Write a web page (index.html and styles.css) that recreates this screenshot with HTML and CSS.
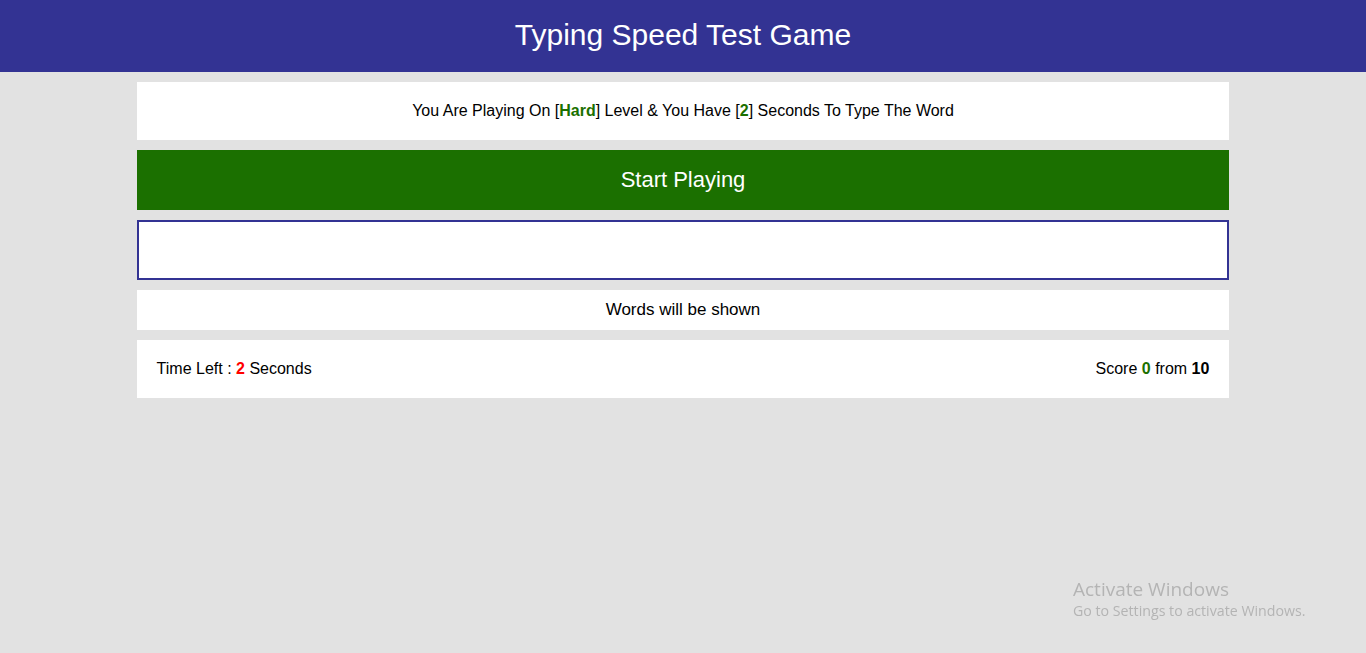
FILE: index.html
```html
<!DOCTYPE html>
<html lang="en">
<head>
<meta charset="utf-8">
<title>Typing Speed Test Game</title>
<link rel="stylesheet" href="styles.css">
</head>
<body>
  <header class="site-header">
    <h1 class="title">Typing Speed Test Game</h1>
  </header>
  <main class="game">
    <div class="message">You Are Playing On [<span class="lvl">Hard</span>] Level &amp; You Have [<span class="lvl">2</span>] Seconds To Type The Word</div>
    <div class="start">Start Playing</div>
    <input class="input" type="text" aria-label="Type the word">
    <div class="upcoming">Words will be shown</div>
    <div class="control">
      <div class="time">Time Left : <span class="secs">2</span> Seconds</div>
      <div class="score">Score <span class="got">0</span> from <span class="total">10</span></div>
    </div>
  </main>
  <div class="activate">
    <div class="activate-title">Activate Windows</div>
    <div class="activate-sub">Go to Settings to activate Windows.</div>
  </div>
</body>
</html>
```
FILE: styles.css
```css
* { box-sizing: border-box; }
html, body { margin: 0; padding: 0; }
body {
  background: #e2e2e2;
  font-family: "Liberation Sans", Arial, sans-serif;
  color: #000;
  font-size: 16px;
  height: 653px;
  overflow: hidden;
}
.site-header {
  background: #333393;
  height: 72px;
  display: flex;
  align-items: center;
  justify-content: center;
}
.title {
  margin: 0;
  color: #fff;
  font-weight: normal;
  font-size: 30px;
  line-height: 34px;
  padding-bottom: 3px;
}
.game {
  width: 80%;
  margin: 10px auto 0;
  display: flex;
  flex-direction: column;
  gap: 10px;
}
.message {
  background: #fff;
  height: 58px;
  display: flex;
  align-items: center;
  justify-content: center;
}
.lvl { color: #1b7000; font-weight: bold; }
.start {
  background: #1b7000;
  color: #fff;
  height: 60px;
  font-size: 22px;
  display: flex;
  align-items: center;
  justify-content: center;
}
.input {
  display: block;
  width: 100%;
  height: 60px;
  border: 2px solid #333393;
  background: #fff;
  outline: none;
  font: inherit;
}
.upcoming {
  background: #fff;
  height: 40px;
  font-size: 17px;
  display: flex;
  align-items: center;
  justify-content: center;
}
.control {
  background: #fff;
  height: 58px;
  padding: 0 20px;
  display: flex;
  align-items: center;
  justify-content: space-between;
}
.secs { color: #f00; font-weight: bold; }
.got { color: #1b7000; font-weight: bold; }
.total { font-weight: bold; }
.activate {
  position: fixed;
  left: 1073px;
  top: 577px;
  font-family: "Open Sans", "DejaVu Sans", sans-serif;
  color: #b4b4b4;
}
.activate-title { font-size: 19px; line-height: 24px; }
.activate-sub { font-size: 14.2px; line-height: 20px; }
```
